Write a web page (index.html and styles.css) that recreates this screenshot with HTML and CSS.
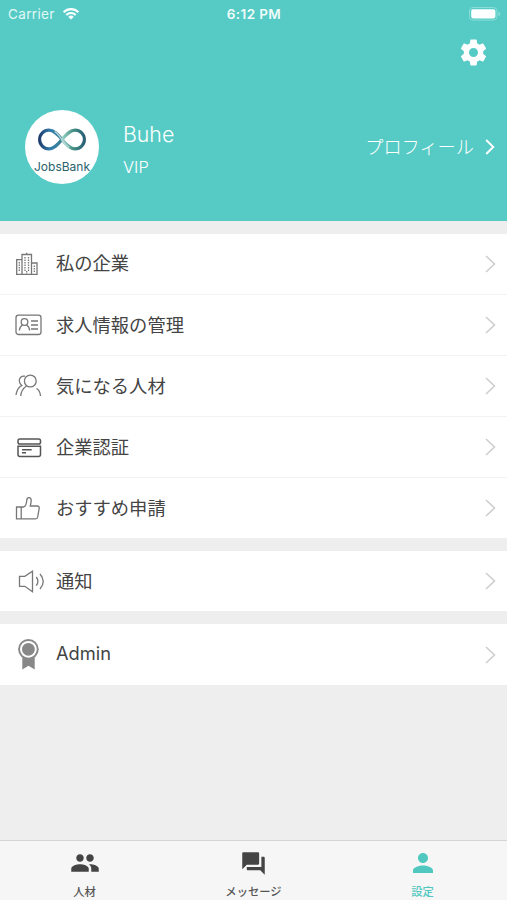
FILE: index.html
```html
<!DOCTYPE html>
<html lang="ja">
<head>
  <meta charset="UTF-8">
  <meta name="viewport" content="width=device-width, initial-scale=1">
  <title>設定</title>
  <link rel="stylesheet" href="styles.css">
</head>
<body>
  <div class="app">
    <header class="header">
      <div class="status">
        <div class="carrier">
          <span>Carrier</span>
          <svg class="wifi" viewBox="0 0 18 13">
            <path d="M1.6 5.2a10.5 10.5 0 0 1 14.8 0M4.3 8a6.7 6.7 0 0 1 9.4 0" fill="none" stroke="#fff" stroke-width="2.1"/>
            <path d="M9 12.6L6.3 9.9a3.8 3.8 0 0 1 5.4 0z" fill="#fff"/>
          </svg>
        </div>
        <span class="time">6:12 PM</span>
        <svg class="battery" viewBox="0 0 32 14">
          <rect x=".5" y=".5" width="27.5" height="12.6" rx="3.5" fill="none" stroke="#8addd7"/>
          <rect x="2.2" y="2.2" width="24.2" height="9.2" rx="1.8" fill="#fff"/>
          <path d="M29.5 4.6v4.6q1.8-.7 1.8-2.3t-1.8-2.3z" fill="#8addd7"/>
        </svg>
      </div>
      <div class="toolbar">
        <svg class="gear" viewBox="0 0 24 24" fill="#fff">
          <path d="M19.43 12.98c.04-.32.07-.64.07-.98s-.03-.66-.07-.98l2.11-1.65c.19-.15.24-.42.12-.64l-2-3.46c-.12-.22-.39-.3-.61-.22l-2.49 1c-.52-.4-1.08-.73-1.69-.98l-.38-2.65C14.46 2.18 14.25 2 14 2h-4c-.25 0-.46.18-.49.42l-.38 2.65c-.61.25-1.17.59-1.69.98l-2.49-1c-.23-.09-.49 0-.61.22l-2 3.46c-.13.22-.07.49.12.64l2.11 1.65c-.04.32-.07.65-.07.98s.03.66.07.98l-2.11 1.65c-.19.15-.24.42-.12.64l2 3.46c.12.22.39.3.61.22l2.49-1c.52.4 1.08.73 1.69.98l.38 2.65c.03.24.24.42.49.42h4c.25 0 .46-.18.49-.42l.38-2.65c.61-.25 1.17-.59 1.69-.98l2.49 1c.23.09.49 0 .61-.22l2-3.46c.12-.22.07-.49-.12-.64l-2.11-1.65zM12 15.5c-1.93 0-3.5-1.57-3.5-3.5s1.57-3.5 3.5-3.5 3.5 1.57 3.5 3.5-1.57 3.5-3.5 3.5z"/>
        </svg>
      </div>
      <div class="profile">
        <div class="avatar">
          <svg class="logo" viewBox="0 0 48 22" fill="none" stroke-width="3">
            <defs>
              <linearGradient id="blue"><stop offset="0" stop-color="#203f70"/><stop offset=".5" stop-color="#347fae"/><stop offset="1" stop-color="#377f91"/></linearGradient>
              <linearGradient id="green"><stop offset="0" stop-color="#9bd4c8"/><stop offset=".5" stop-color="#459084"/><stop offset="1" stop-color="#285f77"/></linearGradient>
            </defs>
            <path d="M24 11C19 5 16 2 11.500 2a9 9 0 0 0 0 18C16 20 19 17 24 11" stroke="url(#blue)"/>
            <path d="M24 11c5-6 8-9 12.500-9a9 9 0 0 1 0 18C32 20 29 17 24 11" stroke="url(#green)"/>
            <path d="M17 3.500c5 2.500 8 12 14 15" stroke="#b9d8dc" stroke-width="1.300"/>
          </svg>
          <span>JobsBank</span>
        </div>
        <div class="user">
          <div class="name">Buhe</div>
          <div class="level">VIP</div>
        </div>
        <div class="profile-link">
          <span>プロフィール</span>
          <svg viewBox="0 0 10 16"><path d="M1.200 1L8.300 8l-7.100 7" fill="none" stroke="#fff" stroke-width="1.900"/></svg>
        </div>
      </div>
    </header>

    <main class="menu">
      <div class="group">
        <div class="row">
          <svg class="icon" viewBox="0 0 32 34">
            <path d="M2.700 27.300V12.700H8M8 27.300V7.500h9.500v19.800M17.500 16h5.500v11.300M2 27.300h21.700M12.700 7.500V5.800"/>
            <path class="dots" d="M5.300 15v10M11 10v14M14.500 10v14M20.300 18.500v7M12.700 24v3"/>
          </svg>
          <span class="label">私の企業</span>
          <svg class="arrow" viewBox="0 0 11 18"><path d="M1 1l8.500 8L1 17"/></svg>
        </div>
        <div class="row">
          <svg class="icon" viewBox="0 0 32 34">
            <rect x="2" y="7.200" width="25" height="19.300" rx="2.500"/>
            <circle cx="10.500" cy="14" r="3.300"/>
            <path d="M5.300 22.500q.5-4 3.200-5.500M12.500 17q2.700 1.500 3.200 5.500M17 13h7M17 17h7M17 21h7"/>
          </svg>
          <span class="label">求人情報の管理</span>
          <svg class="arrow" viewBox="0 0 11 18"><path d="M1 1l8.500 8L1 17"/></svg>
        </div>
        <div class="row">
          <svg class="icon" viewBox="0 0 32 34">
            <circle cx="16.300" cy="12" r="5.900"/>
            <path d="M6.700 27q.6-6.500 5.800-10M22.500 19.500q3.600 2 4 7.500M11 7.200C7.500 6.500 5 9 5.300 12c.2 2 1 3.500 2.500 4.500Q3 19 2 26"/>
          </svg>
          <span class="label">気になる人材</span>
          <svg class="arrow" viewBox="0 0 11 18"><path d="M1 1l8.500 8L1 17"/></svg>
        </div>
        <div class="row">
          <svg class="icon dark" viewBox="0 0 32 34">
            <rect x="4" y="9" width="22.500" height="5" rx="1.800"/>
            <path d="M4 16.300h22.500v8.200q0 2-2 2H6q-2 0-2-2zM8 19.800h9.700M8 22.800h4"/>
          </svg>
          <span class="label">企業認証</span>
          <svg class="arrow" viewBox="0 0 11 18"><path d="M1 1l8.500 8L1 17"/></svg>
        </div>
        <div class="row">
          <svg class="icon" viewBox="0 0 32 34">
            <path d="M2.500 16h4.700v11.800H2.500zM7.200 16h2.600c2.800-1.200 2.700-4.500 3-7 .3-3.200 4.400-3 4.400.3 0 2.200-.6 4-.9 5.700h6.900c1.500 0 2.200 1 2 2.200l-1.500 8.800c-.2 1.200-.9 1.800-2 1.800H7.200"/>
          </svg>
          <span class="label">おすすめ申請</span>
          <svg class="arrow" viewBox="0 0 11 18"><path d="M1 1l8.500 8L1 17"/></svg>
        </div>
      </div>
      <div class="group">
        <div class="row">
          <svg class="icon" viewBox="0 0 32 34">
            <path d="M5.500 12.300h5.300l7.700-5v20.500l-7.700-5.500H5.500zM22.300 13q3.200 4.300 0 8.700M26 10q6.500 7.500 0 15"/>
          </svg>
          <span class="label">通知</span>
          <svg class="arrow" viewBox="0 0 11 18"><path d="M1 1l8.500 8L1 17"/></svg>
        </div>
      </div>
      <div class="group">
        <div class="row">
          <svg class="icon medal" viewBox="0 0 32 34">
            <path d="M8.300 18h12.400v13.500l-6.200-3.700-6.200 3.700z"/>
            <circle cx="14.400" cy="11.300" r="10.300"/>
            <circle class="ring" cx="14.400" cy="11.300" r="7.400"/>
          </svg>
          <span class="label">Admin</span>
          <svg class="arrow" viewBox="0 0 11 18"><path d="M1 1l8.500 8L1 17"/></svg>
        </div>
      </div>
    </main>

    <nav class="tabs">
      <div class="tab">
        <svg viewBox="0 0 24 24"><path d="M16 11c1.660 0 2.990-1.340 2.990-3S17.660 5 16 5s-3 1.340-3 3 1.340 3 3 3zm-8 0c1.660 0 2.990-1.340 2.990-3S9.660 5 8 5 5 6.340 5 8s1.340 3 3 3zm0 2c-2.330 0-7 1.170-7 3.500V19h14v-2.500C15 14.170 10.330 13 8 13zm8 0c-.29 0-.62.02-.97.05 1.160.84 1.970 1.970 1.970 3.450V19h6v-2.500c0-2.330-4.670-3.500-7-3.500z"/></svg>
        <span>人材</span>
      </div>
      <div class="tab">
        <svg class="small" viewBox="0 0 24 24"><path d="M21 6h-2v9H6v2c0 .55.45 1 1 1h11l4 4V7c0-.55-.45-1-1-1zm-4 6V3c0-.55-.45-1-1-1H3c-.55 0-1 .45-1 1v14l4-4h10c.55 0 1-.45 1-1z"/></svg>
        <span>メッセージ</span>
      </div>
      <div class="tab active">
        <svg viewBox="0 0 24 24"><path d="M12 12c2.210 0 4-1.790 4-4s-1.790-4-4-4-4 1.790-4 4 1.790 4 4 4zm0 2c-2.670 0-8 1.340-8 4v2h16v-2c0-2.660-5.330-4-8-4z"/></svg>
        <span>設定</span>
      </div>
    </nav>
  </div>
</body>
</html>
```

FILE: styles.css
```css
* {
  box-sizing: border-box;
}
body {
  margin: 0;
  font-family: Inter, "Noto Sans CJK JP", sans-serif;
  background: #eee;
  color: #444;
}
svg {
  display: block;
  flex: none;
}
.app {
  display: flex;
  flex-direction: column;
  height: 900px;
  overflow: hidden;
}
.header {
  height: 220.5px;
  background: #56cbc5;
  color: #fff;
}
.status {
  display: grid;
  grid-template-columns: 1fr auto 1fr;
  align-items: center;
  height: 27px;
  padding: 0 6px 0 8px;
  font-size: 13px;
}
.carrier {
  display: flex;
  align-items: center;
  gap: 7px;
  font-size: 13.5px;
  letter-spacing: 0.35px;
  color: #e2f8f5;
}
.wifi {
  width: 18px;
  height: 13px;
}
.time {
  margin-left: -1px;
  font-size: 13.5px;
  font-weight: 600;
  letter-spacing: 0.4px;
  color: #effcfa;
}
.battery {
  width: 32px;
  height: 14px;
  justify-self: end;
}
.toolbar {
  display: flex;
  justify-content: flex-end;
  padding: 10px 18px 0 0;
}
.gear {
  width: 31px;
  height: 31px;
}
.profile {
  display: flex;
  align-items: center;
  height: 74px;
  margin-top: 42px;
  padding: 0 12px 0 25px;
}
.avatar {
  display: flex;
  flex-direction: column;
  align-items: center;
  width: 74px;
  height: 74px;
  padding-top: 18px;
  border-radius: 50%;
  background: #fff;
  color: #29626d;
  font-size: 12px;
  line-height: 16px;
}
.logo {
  width: 50px;
  height: 23px;
  margin-bottom: 8px;
}
.user {
  flex: 1;
  margin-left: 24px;
  padding-top: 7px;
  font-weight: 300;
}
.name {
  font-size: 21.300px;
  line-height: 32px;
}
.level {
  font-size: 16.500px;
  line-height: 34px;
}
.profile-link {
  display: flex;
  align-items: center;
  gap: 11px;
  font-family: "Noto Sans CJK JP", sans-serif;
  font-size: 18.200px;
  font-weight: 300;
}
.profile-link span {
  padding-bottom: 2px;
}
.profile-link svg {
  width: 10px;
  height: 16px;
}
.menu {
  flex: 1;
}
.group {
  margin-top: 13px;
  background: #fff;
}
.row {
  display: flex;
  align-items: center;
  height: 60.900px;
  padding: 0 11px 0 14px;
}
.row + .row {
  border-top: 1px solid #f2f2f2;
}
.group + .group .row {
  height: 60.500px;
}
.icon {
  width: 32px;
  height: 34px;
  fill: none;
  stroke: #777;
  stroke-width: 1.300;
}
.icon.dark {
  stroke: #555;
  stroke-width: 1.500;
}
.icon .dots {
  stroke-dasharray: 1.500 1;
}
.icon.medal {
  fill: #888;
  stroke: none;
}
.icon.medal .ring {
  stroke: #fff;
  stroke-width: 2;
}
.label {
  flex: 1;
  margin-left: 10px;
  padding-bottom: 3px;
  font-size: 18.300px;
}
.arrow {
  width: 11px;
  height: 18px;
  fill: none;
  stroke: #ccc;
  stroke-width: 1.500;
}
.tabs {
  display: flex;
  height: 60px;
  border-top: 1px solid #d5d5d5;
  background: #f6f6f6;
}
.tab {
  flex: 1;
  display: flex;
  flex-direction: column;
  align-items: center;
  padding-top: 7px;
  font-size: 11.300px;
  font-weight: 500;
  line-height: 16px;
  color: #555;
}
.tab svg {
  width: 30px;
  height: 30px;
  margin-bottom: 6px;
  fill: #444;
}
.tab svg.small {
  width: 27px;
  height: 27px;
  margin: 2px 0 7px;
}
.tab.active {
  color: #50c8bf;
}
.tab.active svg {
  fill: #50c8bf;
}
```
